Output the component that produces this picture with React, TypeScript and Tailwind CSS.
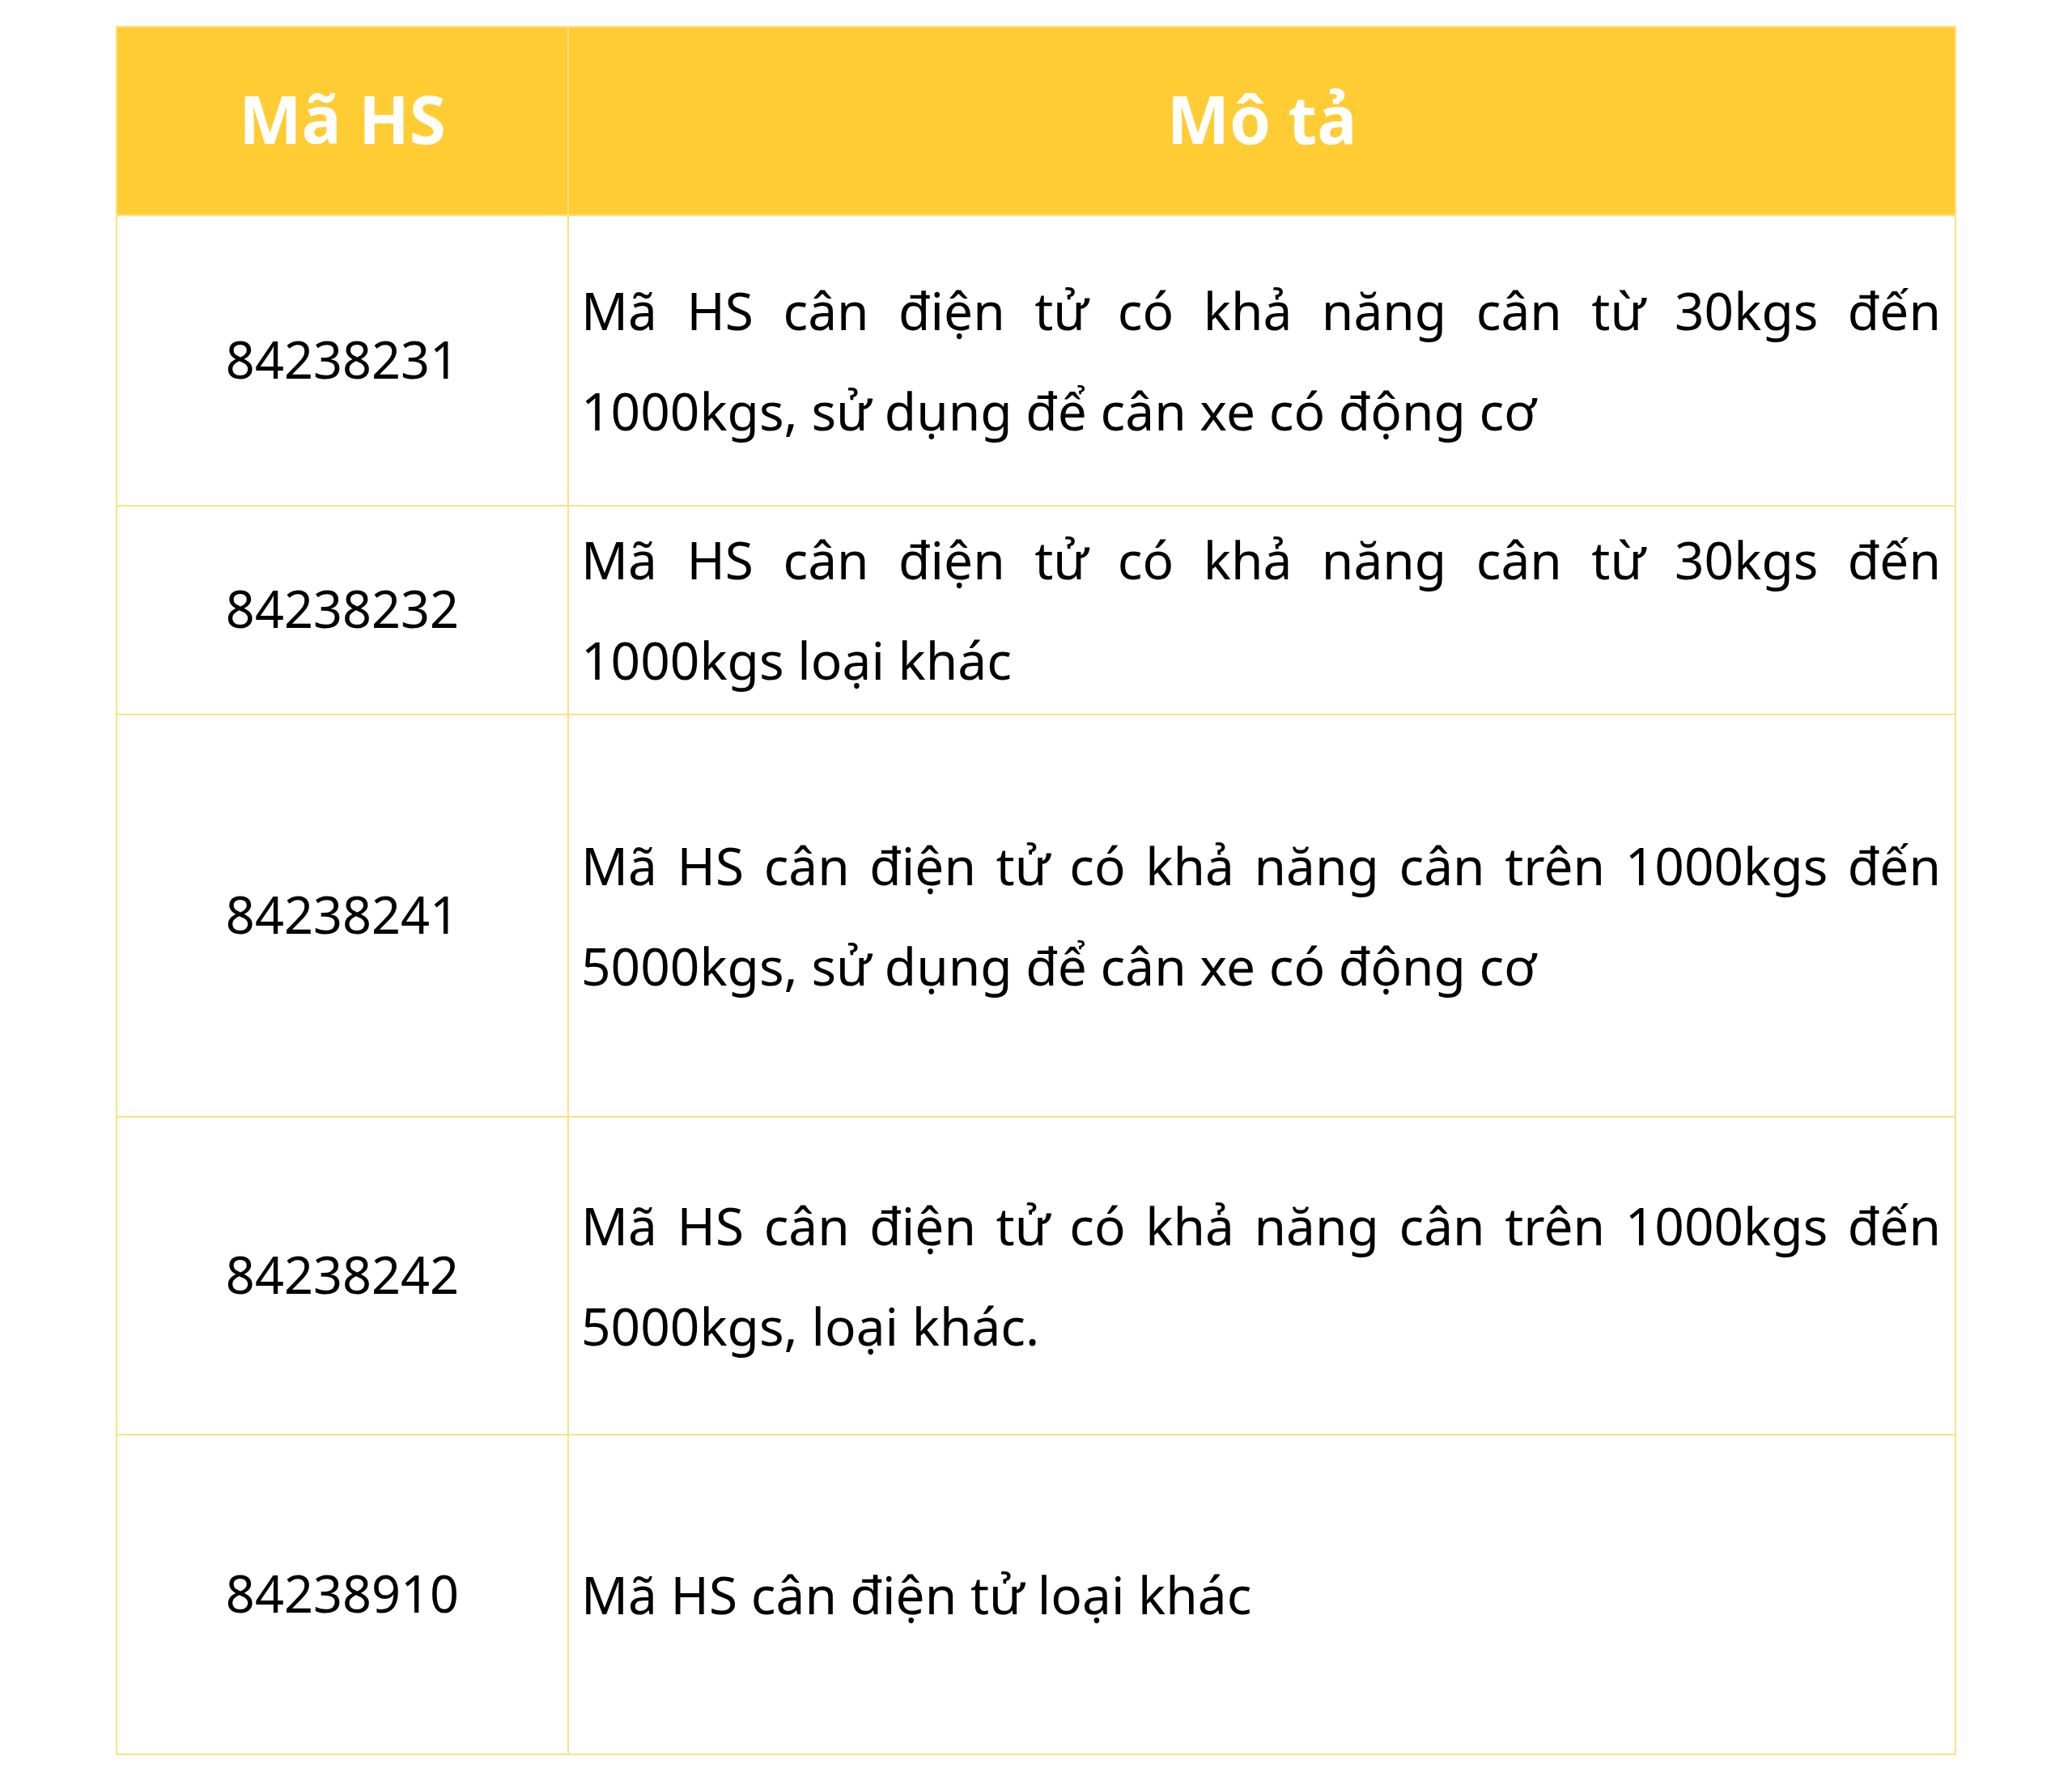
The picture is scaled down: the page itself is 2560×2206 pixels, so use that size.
const rows = [
  { code: '84238231', desc: 'Mã HS cân điện tử có khả năng cân từ 30kgs đến 1000kgs, sử dụng để cân xe có động cơ', h: 'h-[359px]' },
  { code: '84238232', desc: 'Mã HS cân điện tử có khả năng cân từ 30kgs đến 1000kgs loại khác', h: 'h-[258px]' },
  { code: '84238241', desc: 'Mã HS cân điện tử có khả năng cân trên 1000kgs đến 5000kgs, sử dụng để cân xe có động cơ', h: 'h-[497px]' },
  { code: '84238242', desc: 'Mã HS cân điện tử có khả năng cân trên 1000kgs đến 5000kgs, loại khác.', h: 'h-[393px]' },
  { code: '84238910', desc: 'Mã HS cân điện tử loại khác', h: 'h-[395px]' },
]

export default function App() {
  return (
    <div className="w-[2560px] h-[2206px] bg-white pt-[32px] font-['Noto_Sans',sans-serif]">
      <table className="mx-auto w-[2274px] border-collapse table-fixed">
        <colgroup>
          <col className="w-[558px]" />
          <col />
        </colgroup>
        <thead>
          <tr className="h-[233px] bg-[#ffcc33]">
            <th className="border-2 border-[#ffdf80] pb-[8px] text-white font-bold text-[82px] leading-none">Mã HS</th>
            <th className="border-2 border-[#ffdf80] pb-[8px] text-white font-bold text-[82px] leading-none">Mô tả</th>
          </tr>
        </thead>
        <tbody>
          {rows.map(r => (
            <tr key={r.code} className={r.h}>
              <td className="border-2 border-[#ffdf80] pb-[4px] text-center text-black text-[63px] leading-[124px] align-middle">{r.code}</td>
              <td className="border-2 border-[#ffdf80] pl-[15px] pr-[17px] text-black text-[64px] leading-[124px] text-justify align-middle">{r.desc}</td>
            </tr>
          ))}
        </tbody>
      </table>
    </div>
  )
}
